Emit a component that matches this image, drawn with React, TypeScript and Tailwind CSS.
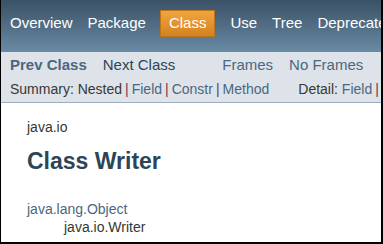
const navItems = ['Overview', 'Package', 'Class', 'Use', 'Tree', 'Deprecated'];

const linkCls = 'text-[#4a6782]';
const sep = <span className="mx-[3px] text-[#6b3a4a]">|</span>;

const App = () => (
  <div className="h-[244px] w-[383px] overflow-hidden border-b-2 border-l border-r-2 border-black bg-white font-['Liberation_Sans',Arial,sans-serif]">
    <div className="flex h-[52px] items-center whitespace-nowrap bg-gradient-to-b from-[#3b5166] to-[#6a8ba5] pb-[5px] pl-[9px] text-[15px] text-white">
      {navItems.map((item, i) =>
        item === 'Class' ? (
          <span
            key={item}
            className="ml-[14px] flex h-[27px] items-center border border-[#b8761c] bg-gradient-to-b from-[#f3a53c] to-[#d4821f] px-[8px]"
          >
            {item}
          </span>
        ) : (
          <span key={item} className={i === 0 ? '' : 'ml-[15px]'}>
            {item}
          </span>
        ),
      )}
    </div>

    <div className="h-[51px] whitespace-nowrap border-b border-[#9eadc0] bg-[#dee3e9] pl-[9px]">
      <div className="flex h-[22px] items-end text-[15px] leading-[18px]">
        <span className="font-bold text-[#4a6782]">Prev Class</span>
        <span className="ml-[16px] text-[#2c4557]">Next Class</span>
        <span className="ml-[47px] text-[#4a6782]">Frames</span>
        <span className="ml-[16px] text-[#4a6782]">No Frames</span>
      </div>
      <div className="mt-[7px] flex text-[14px] leading-[17px] text-[#353833]">
        <span>
          Summary: Nested{sep}
          <span className={linkCls}>Field</span>
          {sep}
          <span className={linkCls}>Constr</span>
          {sep}
          <span className={linkCls}>Method</span>
        </span>
        <span className="ml-[29px]">
          Detail: <span className={linkCls}>Field</span>
          {sep}
        </span>
      </div>
    </div>

    <div className="pl-[26px] pt-[16px] text-[14px] text-[#353833]">
      <div className="leading-[17px]">java.io</div>
      <h2 className="mt-[12px] text-[23px] font-bold leading-[26px] text-[#2c4557]">Class Writer</h2>
      <div className="mt-[26px] leading-[18px] text-[#4a6782]">java.lang.Object</div>
      <div className="pl-[37px] leading-[18px]">java.io.Writer</div>
    </div>
  </div>
);

export default App;
